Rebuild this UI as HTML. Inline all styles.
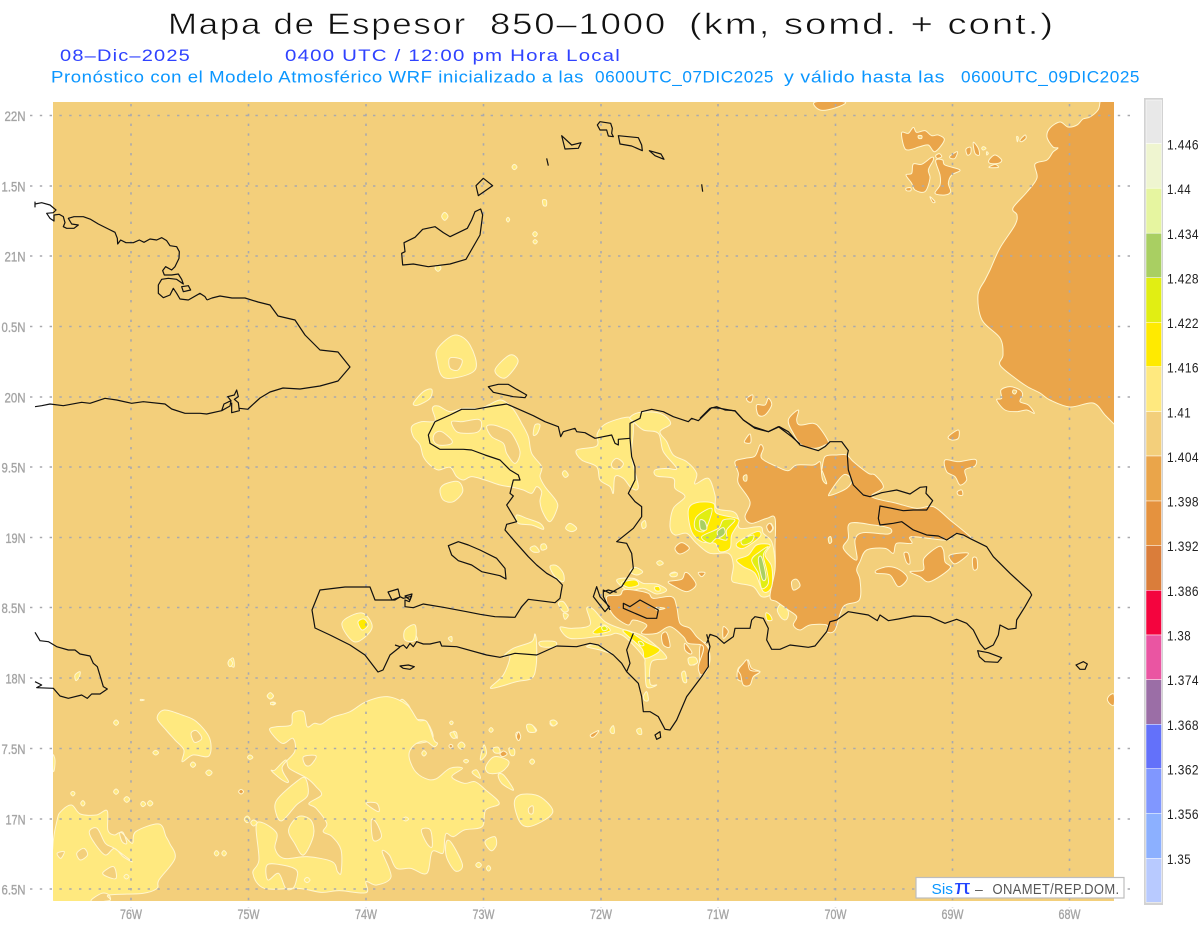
<!DOCTYPE html>
<html lang="es"><head><meta charset="utf-8"><title>Mapa de Espesor</title>
<style>
html,body{margin:0;padding:0;background:#fff;width:1200px;height:927px;overflow:hidden}
svg{display:block;font-family:"Liberation Sans",sans-serif}
path,polygon,polyline{vector-effect:non-scaling-stroke}
.ly path,.or path,.ye path,.li path,.gr path{stroke:#fff6cf;stroke-width:1;stroke-linejoin:round;fill-rule:evenodd}
.ly path{fill:#ffe97f}.or path{fill:#eaa54a}.ye path{fill:#ffea00}.li path{fill:#e1ee13}.gr path{fill:#a9cf62}
.co path{fill:none;stroke:#111;stroke-width:1.2;stroke-linejoin:round}
.ax text{fill:#a4a4a4;font-size:14px;stroke:#a4a4a4;stroke-width:.35}
.cb text{fill:#222;font-size:14px;letter-spacing:.5px}
.t1 text{font-size:30px;fill:#111;stroke:#fff;stroke-width:.55;letter-spacing:1.5px}
.t2 text{font-size:17px;fill:#2f42ff;letter-spacing:1px}
.t3 text{font-size:16.5px;fill:#0a96ff;letter-spacing:.5px}
</style></head><body>
<svg width="1200" height="927" viewBox="0 0 1200 927" xmlns="http://www.w3.org/2000/svg">
<defs><clipPath id="m"><rect x="53" y="102" width="1061" height="799"/></clipPath></defs>
<rect width="1200" height="927" fill="#fff"/>

<g class="t1">
<text x="168" y="34" textLength="299" lengthAdjust="spacingAndGlyphs">Mapa de Espesor</text>
<text x="490" y="34" textLength="177" lengthAdjust="spacingAndGlyphs">850–1000</text>
<text x="689" y="34" textLength="366" lengthAdjust="spacingAndGlyphs">(km, somd. + cont.)</text>
</g>
<g class="t2">
<text x="60" y="61" textLength="131" lengthAdjust="spacingAndGlyphs">08–Dic–2025</text>
<text x="285" y="61" textLength="336" lengthAdjust="spacingAndGlyphs">0400 UTC / 12:00 pm Hora Local</text>
</g>
<g class="t3">
<text x="51" y="82.5" textLength="533" lengthAdjust="spacingAndGlyphs">Pronóstico con el Modelo Atmosférico WRF inicializado a las</text>
<text x="595" y="82.5" textLength="179" lengthAdjust="spacingAndGlyphs">0600UTC_07DIC2025</text>
<text x="784" y="82.5" textLength="161" lengthAdjust="spacingAndGlyphs">y válido hasta las</text>
<text x="961" y="82.5" textLength="179" lengthAdjust="spacingAndGlyphs">0600UTC_09DIC2025</text>
</g>

<rect x="53" y="102" width="1061" height="799" fill="#f3cf7b"/>
<g clip-path="url(#m)">
<!-- light yellow -->
<g class="ly">
<g transform="translate(400,380) scale(.33333)">
<path d="M35,140 65,125 105,123 97,85 115,78 150,95 190,85 240,85 265,75 300,60 325,72 345,95 365,130 385,170 395,220 425,260 420,290 435,320 470,365 470,390 450,425 430,400 420,365 425,335 410,320 395,340 370,330 340,322 300,315 255,300 215,290 190,300 170,290 150,262 115,270 90,255 70,230 60,195 40,170Z M105,160 125,155 155,180 150,193 115,195 100,180Z M260,140 280,135 310,145 335,160 360,215 345,250 320,220 310,190 275,170Z M155,125 185,125 235,118 245,135 235,155 205,160 170,155Z M400,165 405,135 420,135 412,160Z"/>
<path d="M120,330 135,312 175,305 188,335 160,365 130,360Z"/>
<path d="M40,70 70,35 95,28 90,55 55,75Z"/>
<path d="M350,405 380,415 420,430 430,448 395,435 355,430Z"/>
<path d="M497,445 510,430 530,445 515,455Z"/>
<path d="M487,280 495,272 505,285 495,292Z"/>
<path d="M423,495 435,492 440,505 425,510Z"/>
<path d="M390,505 405,498 418,515 400,516Z"/>
<path d="M450,560 470,557 490,580 490,605 465,590Z"/>
<path d="M475,670 490,665 505,690 490,695Z"/>
<path d="M490,700 505,705 495,718Z"/>
<path d="M20,750 35,740 45,760 52,780 25,775Z"/>
<path d="M145,775 155,770 155,785Z"/>
<path d="M420,785 465,785 465,800 425,800Z"/>
<path d="M310,830 340,805 395,785 405,762 410,800 408,860 395,895 350,905 272,925 310,885 330,830Z"/>
<path d="M530,210 590,198 592,160 620,130 690,112 700,150 695,230 715,320 695,325 670,295 645,290 640,340 630,320 600,300 590,260 545,240Z M635,250 650,235 670,250 660,265 640,265Z"/>
<path d="M690,112 720,97 780,100 812,130 780,155 800,185 820,225 860,245 890,280 885,312 925,295 945,345 950,385 1000,395 1015,415 1020,445 1080,440 1090,460 1115,485 1125,540 1125,590 1115,640 1085,650 1060,620 1015,610 995,600 1000,555 985,520 930,520 890,490 860,460 825,465 810,440 820,385 855,350 825,325 820,295 770,288 765,270 800,265 830,265 790,215 775,160 730,150 700,125Z"/>
<path d="M1105,445 1112,430 1120,445 1110,457Z"/>
<path d="M1132,690 1145,672 1165,695 1160,718 1145,715Z"/>
<path d="M690,575 705,562 728,575 710,585Z"/>
<path d="M725,430 735,422 738,440 728,445Z"/>
<path d="M770,548 780,542 790,550 778,556Z"/>
<path d="M812,580 825,576 830,584 818,588Z"/>
<path d="M730,950 740,935 745,960 735,962Z"/>
<path d="M865,840 880,832 890,845 880,855Z"/>
<path d="M845,880 855,875 860,905 850,905Z"/>
<path d="M450,1030 460,1020 472,1030 458,1038Z"/>
<path d="M380,1040 395,1035 410,1052 390,1056Z"/>
<path d="M710,1050 722,1045 725,1062 715,1062Z"/>
<path d="M630,1050 640,1037 643,1058 635,1060Z"/>
<path d="M150,1060 165,1056 170,1072 158,1074Z"/>
<path d="M0,965 25,975 45,1015 80,1025 95,1080 0,1080Z"/>
</g>
<g transform="translate(560,570) scale(.33333)">
<path d="M0,172 35,175 90,165 80,115 100,118 135,155 180,175 215,185 260,205 320,262 275,275 270,340 290,345 260,350 255,285 250,260 200,205 170,190 150,195 110,200 30,205Z"/>
<path d="M170,30 220,25 250,40 290,42 320,60 290,72 250,55 205,62Z"/>
<path d="M330,12 350,8 350,18 335,20Z"/>
<path d="M80,230 110,225 155,250 120,240Z"/>
<path d="M385,265 405,262 412,278 390,285Z"/>
</g>
<path d="M438,348 455,335 470,345 475,370 445,378 437,360Z M450,358 462,360 458,370 450,368Z"/>
<path d="M495,370 510,355 518,362 505,378Z"/>
<path d="M342,623 362,613 372,628 355,642Z"/>
<path d="M405,630 415,625 415,640 405,640Z"/>
<path d="M228,663 233,658 234,667Z"/>
<g transform="translate(0,680) scale(.35714,.33333)">
<path d="M148,500 160,420 170,395 200,375 225,402 270,405 300,392 302,450 320,465 340,458 370,490 380,455 445,432 465,470 475,490 490,535 445,600 440,625 400,640 305,645 300,663 148,663Z M250,455 272,445 295,490 320,505 370,545 345,530 320,505 295,525 265,490Z M215,520 235,505 245,525 225,540Z M288,578 318,560 325,595 300,590Z M255,663 285,640 305,645 305,663Z M160,520 180,515 170,535Z M335,460 345,458 355,490 342,485Z"/>
<path d="M440,115 460,90 510,105 550,125 587,175 585,228 540,225 510,245 515,210 490,180 465,150Z M535,160 550,152 565,175 545,187Z"/>
<path d="M755,150 775,140 815,135 820,100 850,95 860,140 880,130 900,132 930,112 980,95 1025,65 1085,50 1140,75 1170,120 1195,125 1215,180 1225,190 1215,200 1190,183 1160,195 1145,225 1160,270 1190,295 1220,297 1260,265 1295,265 1265,290 1300,310 1330,305 1360,330 1398,370 1360,390 1350,440 1300,450 1270,470 1250,460 1245,480 1240,520 1210,515 1195,580 1150,565 1110,565 1090,525 1070,515 1095,590 1055,615 1025,605 1025,638 950,632 900,637 835,625 740,625 708,580 725,540 717,440 735,428 775,460 770,505 795,535 860,530 930,545 945,575 955,578 955,510 930,470 905,455 915,430 885,385 865,370 900,345 885,320 860,295 810,265 800,240 770,270 760,272 790,300 808,305 790,262 825,215 820,175 790,190Z M850,230 885,228 870,255 855,255Z M1040,420 1055,430 1068,470 1045,480Z M1180,450 1205,450 1210,500 1195,490Z M1025,370 1055,370 1060,395Z M748,555 790,555 830,570 830,600 820,625 800,625 780,580 750,600Z"/>
<path d="M775,360 830,305 855,295 862,345 830,375 790,422 773,400Z"/>
<path d="M808,450 835,410 870,420 878,465 850,525 825,490Z"/>
<path d="M1250,485 1265,490 1295,555 1275,573 1250,530Z"/>
<path d="M1440,370 1455,345 1500,345 1530,365 1548,395 1525,420 1480,440 1455,425Z M1480,385 1492,378 1492,400 1482,400Z"/>
<path d="M1360,260 1385,230 1425,245 1405,275 1370,280Z"/>
<path d="M1345,235 1355,195 1362,220 1350,238Z"/>
<path d="M1322,278 1335,270 1345,295Z"/>
<path d="M1395,285 1410,285 1438,330 1405,310Z"/>
<path d="M1358,485 1385,470 1390,495 1375,512Z"/>
<path d="M1270,155 1278,158 1280,175Z"/>
<path d="M1475,135 1490,135 1500,155 1480,155Z"/>
<path d="M1540,125 1550,120 1560,128 1550,138Z"/>
<path d="M1380,205 1395,202 1400,218 1385,218Z"/>
<path d="M1425,205 1440,208 1440,225 1430,225Z"/>
<path d="M148,225 154,240 152,270 148,270Z"/>
<path d="M325,120 332,128 325,136 318,128Z"/><path d="M540,246 548,254 540,262 533,254Z"/><path d="M585,270 594,278 585,287 576,278Z"/><path d="M325,327 332,335 325,343 318,335Z"/><path d="M355,350 363,358 355,367 347,358Z"/><path d="M400,364 408,372 400,380 394,372Z"/><path d="M420,362 428,370 420,378 413,370Z"/><path d="M232,362 238,370 232,378 226,370Z"/><path d="M204,334 210,340 204,348 198,340Z"/><path d="M692,408 700,418 692,428 684,418Z"/><path d="M710,420 720,428 710,438 702,428Z"/><path d="M606,512 613,520 606,528 600,520Z"/><path d="M627,512 634,520 627,528 621,520Z"/><path d="M757,40 766,48 757,57 748,48Z"/><path d="M765,66 772,70 765,75 758,70Z"/><path d="M436,211 444,218 436,225 428,218Z"/><path d="M700,225 708,232 700,238 693,232Z"/><path d="M1136,411 1144,417 1136,423 1128,417Z"/><path d="M1340,547 1348,555 1340,563 1332,555Z"/><path d="M1368,557 1374,565 1368,573 1362,565Z"/><path d="M860,592 868,600 860,608 852,600Z"/><path d="M354,583 361,590 354,597 347,590Z"/><path d="M1187,212 1194,220 1187,228 1181,220Z"/><path d="M1490,237 1497,245 1490,253 1483,245Z"/><path d="M1375,143 1381,150 1375,157 1369,150Z"/><path d="M1264,123 1269,128 1264,134 1259,128Z"/><path d="M1305,238 1312,243 1305,249 1298,243Z"/><path d="M1292,186 1302,197 1292,208 1282,197Z"/>
</g>
<g transform="translate(0,380) scale(.33333)">
<path d="M225,885 240,875 238,890 228,902Z"/><path d="M690,838 698,850 690,860 684,850Z"/><path d="M811,938 820,948 811,957 802,948Z"/><path d="M813,967 826,970 813,974Z"/><path d="M422,958 433,960 422,962Z"/>
</g>
<g transform="translate(380,100) scale(.33333)">
<path d="M403,193 411,201 403,209 396,201Z"/><path d="M194,337 204,349 194,361 185,349Z"/><path d="M174,495 183,504 174,514 165,504Z"/><path d="M488,300 499,301 499,317 490,316Z"/><path d="M384,352 389,359 384,366 379,359Z"/><path d="M465,395 472,402 465,410 458,402Z"/><path d="M465,419 472,425 465,432 459,425Z"/>
</g>
<g transform="translate(880,95) scale(.33333)">
<path d="M310,155 318,160 310,165 305,160Z"/><path d="M320,170 325,175 320,180Z"/><path d="M410,125 415,128 412,140Z"/>
</g>
</g>
<!-- orange -->
<g class="or">
<path d="M1130,85 1102,88 1100,102 1098,110 1090,117 1083,119 1077,125 1068,127 1060,122 1050,128 1047,137 1053,147 1058,148 1053,152 1047,160 1035,164 1037,178 1027,192 1013,208 1017,215 1015,225 1000,248 990,270 985,280 978,295 982,320 1000,338 1003,355 1000,365 1015,378 1028,387 1040,393 1050,400 1070,407 1093,403 1105,415 1114,424 1130,440Z"/>
<path d="M815,102 845,102 835,108 820,110Z"/>
<g transform="translate(1050,500) scale(.33333)"><path d="M172,598 180,585 192,583 192,615 180,612Z"/></g>
<g transform="translate(700,380) scale(.33333)">
<path d="M105,245 135,235 165,228 180,195 190,205 185,235 235,262 265,272 290,255 340,255 360,245 365,270 375,230 410,225 440,225 460,245 505,280 525,285 550,322 515,350 590,370 650,385 700,380 750,420 815,475 770,460 740,480 635,470 635,490 590,490 580,520 555,505 500,510 480,545 470,570 480,600 478,660 430,680 405,750 380,755 380,735 330,735 300,750 280,735 290,710 265,690 230,665 210,650 225,570 225,500 225,415 200,415 155,430 135,410 150,365 115,310 115,280Z M450,430 520,435 570,445 565,462 490,458 465,480 470,540 430,505 445,475Z M388,340 430,285 455,300 440,325 395,345Z M365,270 380,310 368,300Z M275,605 290,598 300,618 280,630Z M200,440 210,430 218,445 208,456Z M385,475 392,470 395,485 388,490Z M130,290 140,285 140,302 132,302Z"/>
<path d="M530,570 565,560 600,570 622,595 595,620 570,585 530,580Z"/>
<path d="M630,575 670,570 672,535 715,500 730,510 735,545 750,565 690,605 660,590Z"/>
<path d="M750,525 805,520 770,550 755,545Z"/>
<path d="M612,520 625,520 630,550 620,548Z"/>
<path d="M818,535 830,535 832,565 820,568Z"/>
<path d="M265,120 295,90 290,120 300,135 340,130 360,145 385,185 375,195 345,205 305,195 280,160Z"/>
<path d="M170,75 195,75 205,55 215,75 195,105 175,105Z"/>
<path d="M140,55 158,45 155,65 145,65Z"/>
<path d="M135,180 150,162 152,188 135,188Z"/>
<path d="M890,60 905,55 903,30 930,20 960,30 968,45 960,65 985,75 1003,100 980,90 950,95 915,90Z M940,30 950,33 945,42 938,38Z"/>
<path d="M745,170 775,150 775,175 755,180Z"/>
<path d="M735,240 775,245 825,238 825,258 795,270 800,300 780,315 765,290 740,275Z"/>
<path d="M772,335 785,330 788,345 775,345Z"/>
<path d="M115,865 140,850 145,840 155,865 180,875 160,890 150,900 115,900Z"/>
<path d="M0,800 20,790 30,830 25,860 5,890 0,880Z"/>
</g>
<g transform="translate(880,95) scale(.33333)">
<path d="M65,113 85,115 100,97 110,112 135,107 155,122 175,120 193,135 165,170 145,150 120,155 85,165 72,155Z M115,122 125,122 125,130 116,130Z"/>
<path d="M100,207 125,208 155,187 160,195 145,225 150,250 135,290 105,285 95,265 78,240 95,235Z"/>
<path d="M167,197 188,195 195,210 240,225 215,240 205,265 212,290 195,300 165,295 180,270 180,240Z"/>
<path d="M167,182 178,176 185,185 172,190Z"/>
<path d="M210,183 232,170 225,190 212,190Z"/>
<path d="M258,162 272,157 272,175 262,180Z"/>
<path d="M280,142 295,160 298,180 285,175Z"/>
<path d="M327,195 345,180 365,195 355,205 330,205Z"/>
<path d="M327,217 345,208 355,217Z"/>
<path d="M78,280 92,278 92,287 80,287Z"/>
<path d="M150,305 165,320 158,322Z"/>
<path d="M420,135 435,120 438,130 425,140Z"/>
</g>
<g transform="translate(400,380) scale(.33333)">
<path d="M620,650 660,645 670,630 700,630 745,640 760,655 815,650 830,680 840,730 870,745 890,770 925,805 925,860 905,885 895,860 910,800 865,790 850,770 810,740 770,760 725,760 740,735 700,720 685,735 650,715 630,690Z M770,682 795,685 770,690Z"/>
<path d="M785,765 800,758 810,800 790,795Z"/>
<path d="M855,790 875,815 870,822 855,810Z"/>
<path d="M825,505 845,488 868,505 840,522Z"/>
<path d="M805,605 845,598 855,578 870,585 888,615 860,635 825,620Z"/>
<path d="M895,578 915,578 905,590Z"/>
<path d="M1015,870 1030,850 1042,840 1050,870 1080,875 1060,890 1050,915 1030,915 1022,885Z"/>
<path d="M970,740 985,755 970,775Z"/>
<path d="M348,1060 358,1057 358,1076 350,1076Z"/>
<path d="M572,1064 596,1052 585,1068 575,1072Z"/>
</g>
<g transform="translate(0,680) scale(.35714,.33333)">
<path d="M1446,170 1452,156 1458,170 1452,182Z"/><path d="M1400,222 1410,213 1420,222 1408,230Z"/><path d="M1257,198 1262,193 1268,198 1262,204Z"/><path d="M668,335 675,328 682,335 675,342Z"/>
</g>
</g>
<!-- yellow -->
<g class="ye">
<g transform="translate(660,480) scale(.33333)">
<path d="M85,90 110,68 160,70 170,100 230,115 235,130 215,165 210,205 180,215 165,190 125,185 95,155Z"/>
<path d="M230,190 290,155 300,170 250,205Z"/>
<path d="M230,240 265,225 290,195 330,195 315,225 335,260 335,320 310,335 285,280 250,260Z"/>
</g>
<g transform="translate(560,570) scale(.33333)">
<path d="M185,38 225,30 235,45 205,52Z"/>
<path d="M100,185 130,165 150,178 145,185 110,192Z"/>
<path d="M190,185 210,185 255,215 300,240 255,265 245,235Z"/>
<path d="M283,52 297,50 300,62 288,62Z"/>
</g>
<path d="M358,622 364,619 368,625 362,630Z"/>
<path d="M766,613 770,615 772,620 767,620Z"/>
</g>
<!-- lime -->
<g class="li">
<g transform="translate(660,480) scale(.33333)">
<path d="M110,110 155,85 145,130 130,155 105,145Z"/>
<path d="M125,170 175,145 190,120 225,120 200,150 200,180 170,175 150,190Z"/>
<path d="M245,180 280,165 275,185 250,195Z"/>
<path d="M275,240 300,215 325,200 310,225 320,270 325,310 305,325 295,280Z"/>
</g>
<g transform="translate(560,570) scale(.33333)">
<path d="M125,172 135,168 142,178 130,182Z"/>
<path d="M235,215 245,215 252,225 242,227Z"/>
</g>
</g>
<!-- green -->
<g class="gr">
<g transform="translate(660,480) scale(.33333)">
<path d="M120,120 135,125 140,148 122,148Z"/>
<path d="M172,155 190,143 195,160 178,172Z"/>
<path d="M295,240 305,232 318,290 307,298Z"/>
</g>
</g>
</g>

<!-- grid -->
<g fill="none" stroke="#a9a9ad" stroke-width="1.6" stroke-dasharray="2.4 7.4">
<path d="M30,115.5H1133M30,186H1133M30,256H1133M30,326.5H1133M30,397H1133M30,467H1133M30,537.5H1133M30,607.5H1133M30,678H1133M30,748.5H1133M30,819H1133M30,889H1133"/>
<path d="M131,104V908M248.5,104V908M366,104V908M483.5,104V908M601,104V908M718,104V908M835.5,104V908M952.5,104V908M1069.5,104V908"/>
</g>

<!-- coast -->
<g class="co">
<g transform="scale(.33333)">
<path d="M105,622 105,605 M105,612 125,608 150,615 168,630 160,638 140,640 150,655 162,663 162,645 178,643 190,650 195,668 190,680 200,685 222,685 235,675 215,672 205,655 222,650 250,650 272,658 295,672 325,687 345,697 352,715 353,732 362,720 378,728 400,728 418,720 432,727 450,717 470,720 485,713 500,722 510,737 530,740 538,755 537,775 525,800 515,810 497,800 488,812 493,825 515,825 535,822 545,838 550,852 530,838 505,835 485,838 475,855 475,880 490,893 510,885 520,865 530,880 540,897 565,900 600,880 615,890 621,900"/>
<path d="M545,860 565,857 572,870 550,875Z"/>
</g>
<path d="M207,300 212,298 220,296 232,298 245,298 258,302 270,305 278,316 295,320 305,335 320,350 338,352 350,367 338,381 320,386 300,389 283,388 270,392 260,398 248,409"/>
<g transform="translate(0,380) scale(.33333)">
<path d="M105,80 125,77 150,72 190,77 245,67 270,70 315,55 350,60 395,70 430,65 495,72 515,87 555,100 600,100 620,102 665,92 690,78 693,62 672,72 665,92 M693,62 683,50 703,45 710,30 715,50 703,58 715,68 718,92 695,98 695,68 M718,85 745,88"/>
<path d="M105,757 120,782 145,785 170,800 205,810 225,810 240,822 270,828 280,850 292,860 310,920 322,927 300,942 275,942 262,955 245,945 205,955 180,948 160,925 110,923 125,915 105,905"/>
</g>
<g transform="translate(400,380) scale(.33333)">
<path d="M105,125 150,105 185,88 225,88 280,78 320,72 350,85 400,107 435,125 475,140 482,170 490,155 525,145 530,155 555,158 585,175 635,165 645,190 655,195 655,178 690,175 690,130 720,115 725,95 755,88 790,95 820,110 865,125 875,115 895,122 935,83 960,85 1005,93 1030,120 1060,140 1105,155 1135,140 1175,170 1200,192"/>
<path d="M690,175 695,230 705,260 705,300 685,340 705,365 725,380 725,410 700,445 650,485 680,490 695,520 700,565 665,620 630,640 610,630 610,650 630,690 M590,620 580,650 615,695 628,680 600,650Z M610,635 625,630 650,637"/>
<path d="M670,670 670,685 740,715 770,715 775,690 720,660 690,680Z"/>
<path d="M700,760 680,810 690,850 680,875"/>
<path d="M920,763 930,800 925,820 925,860 905,890 860,950 830,1020 810,1050 795,1048 775,1010 750,995 730,995 725,950 715,910 680,875 665,850 640,825 595,795 570,790 530,800 470,798 410,825 345,820 300,832 260,825 170,800 125,798 120,785 90,792 70,792 50,785 40,800 30,790 20,805 10,795 0,800 -15,795"/>
<path d="M0,650 10,655 30,650 35,648 28,665 15,660 15,680 40,683 70,672 130,682 200,695 240,703 285,710 345,712 365,680 385,658 465,668 480,655 487,615 470,597 440,580 410,555 385,530 345,485 315,450 320,433 350,425 320,375 340,348 330,340 340,300 360,300 355,285 330,270 300,240 255,225 215,210 190,208 120,208 90,190 85,165 105,125"/>
<path d="M145,497 175,485 205,495 240,510 290,535 315,565 318,597 300,587 245,575 215,555 175,542 155,525Z"/>
<path d="M265,20 295,13 325,13 350,28 380,45 375,53 340,50 280,37Z"/>
<path d="M0,858 25,855 43,860 30,868 10,865Z"/>
<path d="M765,1065 780,1055 782,1072 770,1078Z"/>
</g>
<path d="M400,647 390,655 383,670 378,672 365,655 350,645 330,635 315,628 312,610 320,590 345,587 370,587 375,600 395,600 400,597"/>
<path d="M388,592 398,589 400,597 392,600Z"/>
<path d="M405,596 412,594 410,600Z"/>
<g transform="translate(700,380) scale(.33333)">
<path d="M0,115 30,85 50,80 75,90 105,92 130,120 165,145 205,155 238,140 265,155 300,195 355,212 375,200 390,185 425,185 445,212 442,225 445,270 460,315 490,345 510,350 545,338 590,330 630,342 660,322 680,320 678,340 698,362 680,390 640,390 610,392 540,378 535,415 540,435 580,430 605,425 640,450 680,465 715,468 740,480 770,460 790,465 815,478 860,500 880,530 930,580 990,635 995,645 975,680 950,720 948,745 925,748 900,735 895,765 880,795 855,808 840,790 820,750 800,730 770,718 735,730 690,710 640,708 595,717 565,722 540,705 532,722 505,705 445,695 410,720 390,725 380,755 345,798 325,802 270,795 240,808 215,808 200,780 205,745 190,715 165,710 155,720 150,745 105,745 100,770 72,790 50,770 30,763 20,790"/>
<path d="M833,812 865,818 905,833 893,847 855,845 838,830Z"/>
</g>
<g transform="translate(380,100) scale(.33333)">
<path d="M65,460 75,455 72,428 105,412 128,388 165,380 190,398 210,410 262,385 275,360 285,335 302,327 308,345 300,405 258,478 210,492 145,500 100,492 68,495Z"/>
<path d="M288,257 310,235 338,257 295,287Z"/>
<path d="M545,107 575,135 603,128 595,145 555,147Z"/>
<path d="M652,75 660,65 692,70 697,85 695,100 700,110 685,108 680,90 660,90Z"/>
<path d="M715,107 775,113 785,135 787,152 755,138 720,132Z"/>
<path d="M808,152 843,162 852,178 825,167Z"/>
<path d="M500,175 505,197 M965,253 968,275"/>
</g>
<g transform="translate(1050,500) scale(.33333)"><path d="M78,495 100,485 112,492 105,508 90,508Z"/></g>
</g>

<!-- axis -->
<g class="ax" text-anchor="end">
<text x="25.5" y="121" textLength="21" lengthAdjust="spacingAndGlyphs">22N</text>
<text x="25.5" y="191.5" textLength="24" lengthAdjust="spacingAndGlyphs">1.5N</text>
<text x="25.5" y="261.5" textLength="21" lengthAdjust="spacingAndGlyphs">21N</text>
<text x="25.5" y="332" textLength="24" lengthAdjust="spacingAndGlyphs">0.5N</text>
<text x="25.5" y="402.5" textLength="21" lengthAdjust="spacingAndGlyphs">20N</text>
<text x="25.5" y="472.5" textLength="24" lengthAdjust="spacingAndGlyphs">9.5N</text>
<text x="25.5" y="543" textLength="20" lengthAdjust="spacingAndGlyphs">19N</text>
<text x="25.5" y="613" textLength="24" lengthAdjust="spacingAndGlyphs">8.5N</text>
<text x="25.5" y="683.5" textLength="20" lengthAdjust="spacingAndGlyphs">18N</text>
<text x="25.5" y="754" textLength="24" lengthAdjust="spacingAndGlyphs">7.5N</text>
<text x="25.5" y="824.5" textLength="20" lengthAdjust="spacingAndGlyphs">17N</text>
<text x="25.5" y="894.5" textLength="24" lengthAdjust="spacingAndGlyphs">6.5N</text>
</g>
<g class="ax">
<text x="120" y="919" textLength="22" lengthAdjust="spacingAndGlyphs">76W</text>
<text x="237.5" y="919" textLength="22" lengthAdjust="spacingAndGlyphs">75W</text>
<text x="355" y="919" textLength="22" lengthAdjust="spacingAndGlyphs">74W</text>
<text x="472.5" y="919" textLength="22" lengthAdjust="spacingAndGlyphs">73W</text>
<text x="590" y="919" textLength="22" lengthAdjust="spacingAndGlyphs">72W</text>
<text x="707" y="919" textLength="22" lengthAdjust="spacingAndGlyphs">71W</text>
<text x="824.5" y="919" textLength="22" lengthAdjust="spacingAndGlyphs">70W</text>
<text x="941.5" y="919" textLength="22" lengthAdjust="spacingAndGlyphs">69W</text>
<text x="1058.5" y="919" textLength="22" lengthAdjust="spacingAndGlyphs">68W</text>
</g>

<!-- legend box -->
<rect x="916" y="877.5" width="208" height="20.5" fill="#fff" stroke="#bdbdbd" stroke-width="1.2"/>
<text x="931.5" y="894" font-size="15" textLength="21.5" lengthAdjust="spacingAndGlyphs" fill="#0a96ff">Sis</text>
<text x="954" y="894" font-size="20" textLength="17" lengthAdjust="spacingAndGlyphs" fill="#2244ff">π</text>
<text x="975" y="894" font-size="14" fill="#555">–</text>
<text x="992.5" y="894" font-size="14.5" textLength="127" lengthAdjust="spacingAndGlyphs" letter-spacing=".4" fill="#555">ONAMET/REP.DOM.</text>

<!-- colour bar -->
<rect x="1144" y="98" width="19" height="807" fill="#d2d2d2"/>
<g stroke="#fff" stroke-width=".5">
<rect x="1146" y="100" width="15.5" height="43.5" fill="#e8e8e8"/>
<rect x="1146" y="143.5" width="15.5" height="44.7" fill="#eff5d0"/>
<rect x="1146" y="188.2" width="15.5" height="45" fill="#e6f5a0"/>
<rect x="1146" y="233.2" width="15.5" height="44.5" fill="#a9cf62"/>
<rect x="1146" y="277.7" width="15.5" height="44.6" fill="#e1ee13"/>
<rect x="1146" y="322.3" width="15.5" height="44.4" fill="#ffea00"/>
<rect x="1146" y="366.7" width="15.5" height="45" fill="#ffe97f"/>
<rect x="1146" y="411.7" width="15.5" height="44.3" fill="#f3cf7b"/>
<rect x="1146" y="456" width="15.5" height="45" fill="#eaa54a"/>
<rect x="1146" y="501" width="15.5" height="44.7" fill="#e5923e"/>
<rect x="1146" y="545.7" width="15.5" height="44.6" fill="#da7d3a"/>
<rect x="1146" y="590.3" width="15.5" height="44.7" fill="#f4043e"/>
<rect x="1146" y="635" width="15.5" height="44.7" fill="#ea55a2"/>
<rect x="1146" y="679.7" width="15.5" height="44.6" fill="#9b6ea6"/>
<rect x="1146" y="724.3" width="15.5" height="44.4" fill="#6371fa"/>
<rect x="1146" y="768.7" width="15.5" height="44.6" fill="#8097ff"/>
<rect x="1146" y="813.3" width="15.5" height="45" fill="#8cb0ff"/>
<rect x="1146" y="858.3" width="15.5" height="44" fill="#b8caff"/>
</g>
<g class="cb">
<text x="1167" y="149.5" textLength="32" lengthAdjust="spacingAndGlyphs">1.446</text>
<text x="1167" y="194" textLength="24" lengthAdjust="spacingAndGlyphs">1.44</text>
<text x="1167" y="239" textLength="32" lengthAdjust="spacingAndGlyphs">1.434</text>
<text x="1167" y="283.5" textLength="32" lengthAdjust="spacingAndGlyphs">1.428</text>
<text x="1167" y="328" textLength="32" lengthAdjust="spacingAndGlyphs">1.422</text>
<text x="1167" y="372.5" textLength="32" lengthAdjust="spacingAndGlyphs">1.416</text>
<text x="1167" y="417.5" textLength="24" lengthAdjust="spacingAndGlyphs">1.41</text>
<text x="1167" y="462" textLength="32" lengthAdjust="spacingAndGlyphs">1.404</text>
<text x="1167" y="506.5" textLength="32" lengthAdjust="spacingAndGlyphs">1.398</text>
<text x="1167" y="551" textLength="32" lengthAdjust="spacingAndGlyphs">1.392</text>
<text x="1167" y="596" textLength="32" lengthAdjust="spacingAndGlyphs">1.386</text>
<text x="1167" y="640.5" textLength="24" lengthAdjust="spacingAndGlyphs">1.38</text>
<text x="1167" y="685" textLength="32" lengthAdjust="spacingAndGlyphs">1.374</text>
<text x="1167" y="730" textLength="32" lengthAdjust="spacingAndGlyphs">1.368</text>
<text x="1167" y="774.5" textLength="32" lengthAdjust="spacingAndGlyphs">1.362</text>
<text x="1167" y="819" textLength="32" lengthAdjust="spacingAndGlyphs">1.356</text>
<text x="1167" y="864" textLength="24" lengthAdjust="spacingAndGlyphs">1.35</text>
</g>
</svg>
<script>
document.querySelectorAll('.ly path,.or path,.ye path,.li path,.gr path').forEach(function(p){
  var out='';
  p.getAttribute('d').split('M').forEach(function(s){
    s=s.replace('Z','').trim();if(!s)return;
    var a=s.split(/\s+/).map(function(q){return q.split(',').map(Number)}),n=a.length;
    if(n<3)return;
    out+='M'+a[0][0]+','+a[0][1];
    for(var i=0;i<n;i++){
      var p0=a[(i+n-1)%n],p1=a[i],p2=a[(i+1)%n],p3=a[(i+2)%n];
      out+='C'+(p1[0]+(p2[0]-p0[0])/6).toFixed(1)+','+(p1[1]+(p2[1]-p0[1])/6).toFixed(1)+' '+(p2[0]-(p3[0]-p1[0])/6).toFixed(1)+','+(p2[1]-(p3[1]-p1[1])/6).toFixed(1)+' '+p2[0]+','+p2[1];
    }
    out+='Z';
  });
  p.setAttribute('d',out);
});
</script>
</body></html>
